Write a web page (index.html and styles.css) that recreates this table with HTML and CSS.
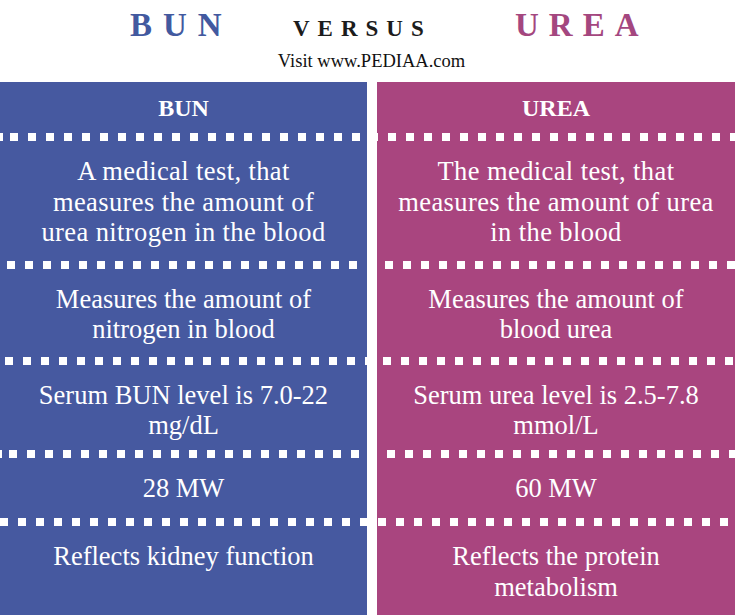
FILE: index.html
```html
<!DOCTYPE html>
<html>
<head>
<meta charset="utf-8">
<link rel="stylesheet" href="styles.css">
</head>
<body>
<header class="title">
  <div class="title-row">
    <span class="t-word t-bun">BUN</span>
    <span class="t-vs">VERSUS</span>
    <span class="t-word t-urea">UREA</span>
  </div>
  <div class="visit">Visit www.PEDIAA.com</div>
</header>
<main class="table">
  <div class="cell head blue">BUN</div>
  <div class="cell head pink">UREA</div>
  <div class="dash d1"></div>
  <div class="cell blue r1">A medical test, that<br>measures the amount of<br>urea nitrogen in the blood</div>
  <div class="cell pink r1">The medical test, that<br>measures the amount of urea<br>in the blood</div>
  <div class="dash d2"></div>
  <div class="cell blue">Measures the amount of<br>nitrogen in blood</div>
  <div class="cell pink">Measures the amount of<br>blood urea</div>
  <div class="dash d3"></div>
  <div class="cell blue r3">Serum BUN level is 7.0-22<br>mg/dL</div>
  <div class="cell pink r3">Serum urea level is 2.5-7.8<br>mmol/L</div>
  <div class="dash d4"></div>
  <div class="cell blue r4">28 MW</div>
  <div class="cell pink r4">60 MW</div>
  <div class="dash d5"></div>
  <div class="cell blue last">Reflects kidney function</div>
  <div class="cell pink last">Reflects the protein<br>metabolism</div>
</main>
</body>
</html>
```
FILE: styles.css
```css
html, body {
  margin: 0;
  padding: 0;
  background: #ffffff;
}
body {
  width: 735px;
  height: 615px;
  overflow: hidden;
  font-family: "Liberation Serif", "DejaVu Serif", serif;
}
.title {
  height: 82px;
  display: flex;
  flex-direction: column;
}
.title-row {
  display: flex;
  align-items: baseline;
  padding-top: 7px;
  padding-left: 130px;
  height: 42px;
  box-sizing: border-box;
}
.t-word {
  font-size: 33px;
  font-weight: bold;
  letter-spacing: 11px;
}
.t-bun {
  color: #42599f;
  width: 163px;
}
.t-vs {
  font-size: 23px;
  font-weight: bold;
  letter-spacing: 8px;
  color: #1c1c1c;
  width: 222px;
}
.t-urea {
  color: #a4477f;
  letter-spacing: 10px;
}
.visit {
  text-align: center;
  font-size: 18.5px;
  color: #111;
  padding-top: 9px;
  padding-left: 8px;
}
.table {
  display: grid;
  grid-template-columns: 367px 358px;
  column-gap: 10px;
  height: 533px;
  grid-template-rows: auto 8px auto 9px auto 8px auto 8px auto 9px 1fr;
}
.cell {
  color: #ffffff;
  text-align: center;
  font-size: 26.5px;
  line-height: 30.5px;
  padding: 15px 6px 12px;
}
.blue { background: #4659a0; }
.pink { background: #a9457f; }
.head {
  font-size: 24px;
  font-weight: bold;
  line-height: 30px;
  padding: 11px 0 10px;
}
.r1 { letter-spacing: 0.4px; }
.r3 { padding-bottom: 9px; }
.r4 { padding-bottom: 14px; }
.dash {
  grid-column: 1 / 3;
  background-image:
    repeating-linear-gradient(90deg, #ffffff 0 8px, transparent 8px 18px),
    linear-gradient(90deg, #4659a0 0 367px, #ffffff 367px 377px, #a9457f 377px);
  background-size: 100% 8px, 100% 100%;
  background-repeat: repeat-x, no-repeat;
  background-position: 10px 0, 0 0;
}
.d1 { background-position: 10px 0, 0 0; }
.d2 { background-position: 7px 1px, 0 0; }
.d3 { background-position: 5px 0, 0 0; }
.d4 { background-position: 9px 0, 0 0; }
.d5 { background-position: 0 1px, 0 0; }
.last { padding-bottom: 0; }
```
